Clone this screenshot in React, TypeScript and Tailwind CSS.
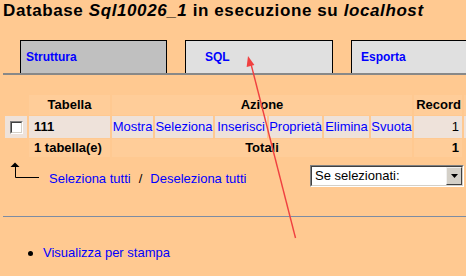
import React from "react";

const actions = ["Mostra", "Seleziona", "Inserisci", "Proprietà", "Elimina", "Svuota"];
const colWidths = [22, 81, 41, 58, 52, 53, 45, 41, 48, 40];

function Checkbox() {
  return (
    <span className="inline-block w-[13px] h-[13px] border border-t-[#808080] border-l-[#808080] border-b-white border-r-white align-middle">
      <span className="block w-full h-full border border-t-[#404040] border-l-[#404040] border-b-[#d4d0c8] border-r-[#d4d0c8] bg-white" />
    </span>
  );
}

export default function App() {
  return (
    <div className="relative w-[466px] h-[276px] overflow-hidden bg-[#ffc991] pl-[3px] font-['Liberation_Sans',Arial,sans-serif] text-black">
      <h1 className="pt-[1px] text-[17px] leading-[20px] font-bold tracking-[0.6px] whitespace-nowrap">
        Database <i>Sql10026_1</i> in esecuzione su <i>localhost</i>
      </h1>

      {/* tabs */}
      <div className="mt-[19px] flex items-end border-b-2 border-[#888888] text-[12px] leading-[16px] font-bold text-[#0000ff]">
        <a className="ml-[17px] flex items-center w-[147px] h-[33px] shrink-0 border border-b-0 border-black bg-[#c0c0c0] pl-[5px]">
          Struttura
        </a>
        <a className="ml-[18px] flex items-center w-[148px] h-[33px] shrink-0 border border-b-0 border-black bg-[#e0e0e0] pl-[19px]">
          SQL
        </a>
        <a className="ml-[18px] flex items-center w-[147px] h-[33px] shrink-0 border border-b-0 border-black bg-[#e0e0e0] pl-[9px]">
          Esporta
        </a>
      </div>

      {/* tables list */}
      <table className="mt-[19px] table-fixed w-[503px] border-separate border-spacing-x-[2px] border-spacing-y-[1px] text-[13px] leading-[16px]">
        <colgroup>
          {colWidths.map((w, i) => (
            <col key={i} style={{ width: w }} />
          ))}
        </colgroup>
        <thead>
          <tr className="h-[20px] font-bold">
            <td className="p-0" />
            <th className="p-0 bg-[#ffcd99] text-center">Tabella</th>
            <th colSpan={6} className="p-0 bg-[#ffcd99] text-center">Azione</th>
            <th className="p-0 bg-[#ffcd99] text-right pr-[1px]">Record</th>
            <th className="p-0 bg-[#ffcd99]" />
          </tr>
        </thead>
        <tbody>
          <tr className="h-[22px]">
            <td className="p-0 bg-[#eee2da] text-center">
              <Checkbox />
            </td>
            <td className="p-0 pl-[5px] bg-[#eee2da] font-bold">111</td>
            {actions.map((a) => (
              <td key={a} className="p-0 bg-[#eee2da] text-center text-[#0000ff] whitespace-nowrap">
                {a}
              </td>
            ))}
            <td className="p-0 pr-[3px] bg-[#eee2da] text-right">1</td>
            <td className="p-0 bg-[#eee2da]" />
          </tr>
          <tr className="h-[18px] font-bold">
            <td className="p-0" />
            <td className="p-0 pl-[5px] bg-[#ffcd99] whitespace-nowrap">1 tabella(e)</td>
            <td colSpan={6} className="p-0 bg-[#ffcd99] text-center">Totali</td>
            <td className="p-0 pr-[3px] bg-[#ffcd99] text-right">1</td>
            <td className="p-0" />
          </tr>
        </tbody>
      </table>

      {/* select all row */}
      <div className="mt-[3px] h-[26px] flex items-start text-[13px] leading-[16px]">
        <svg className="ml-[5px] mt-[1px] shrink-0" width="34" height="18" viewBox="0 0 34 18">
          <path d="M7 0.5 L11.5 5 L2.5 5 Z" fill="black" />
          <path d="M7.5 5 V15.5 H31" fill="none" stroke="black" strokeWidth="1" />
        </svg>
        <div className="ml-[7px] mt-[10px] flex whitespace-nowrap text-[#0000ff]">
          <a>Seleziona tutti</a>
          <span className="mx-[8px] text-black">/</span>
          <a>Deseleziona tutti</a>
        </div>
        <div className="ml-auto mr-[2px] mt-[4px] w-[154px] h-[22px] border border-t-[#808080] border-l-[#808080] border-b-white border-r-white">
          <div className="h-full flex items-center border border-t-[#404040] border-l-[#404040] border-b-[#d4d0c8] border-r-[#d4d0c8] bg-white">
            <span className="flex-1 pl-[3px] whitespace-nowrap">Se selezionati:</span>
            <span className="w-[16px] h-full flex items-center justify-center bg-[#d4d0c8] border border-t-[#f0f0f0] border-l-[#f0f0f0] border-b-[#404040] border-r-[#404040]">
              <svg width="7" height="4" viewBox="0 0 7 4">
                <path d="M0 0 H7 L3.5 4 Z" fill="black" />
              </svg>
            </span>
          </div>
        </div>
      </div>

      <div className="mt-[29px] h-px bg-[#7d8ca3]" />

      {/* operations list */}
      <ul className="mt-[28px] flex flex-col gap-[12px] text-[13px] leading-[16px]">
        <li className="flex items-center">
          <span className="ml-[25px] w-[5px] h-[5px] rounded-full bg-black" />
          <a className="ml-[10px] text-[#0000ff]">Visualizza per stampa</a>
        </li>
        <li className="flex items-center">
          <span className="ml-[25px] w-[5px] h-[5px] rounded-full bg-black" />
          <span className="ml-[10px] whitespace-nowrap">Crea una nuova tabella nel database Sql10026_1</span>
        </li>
      </ul>

      {/* red annotation arrow */}
      <svg className="absolute left-0 top-0 pointer-events-none" width="466" height="276" viewBox="0 0 466 276">
        <line x1="295.5" y1="238" x2="251" y2="64" stroke="#f04040" strokeWidth="1.4" />
        <path d="M248 56 L254.4 65 L246.6 67 Z" fill="#f04040" />
      </svg>
    </div>
  );
}
